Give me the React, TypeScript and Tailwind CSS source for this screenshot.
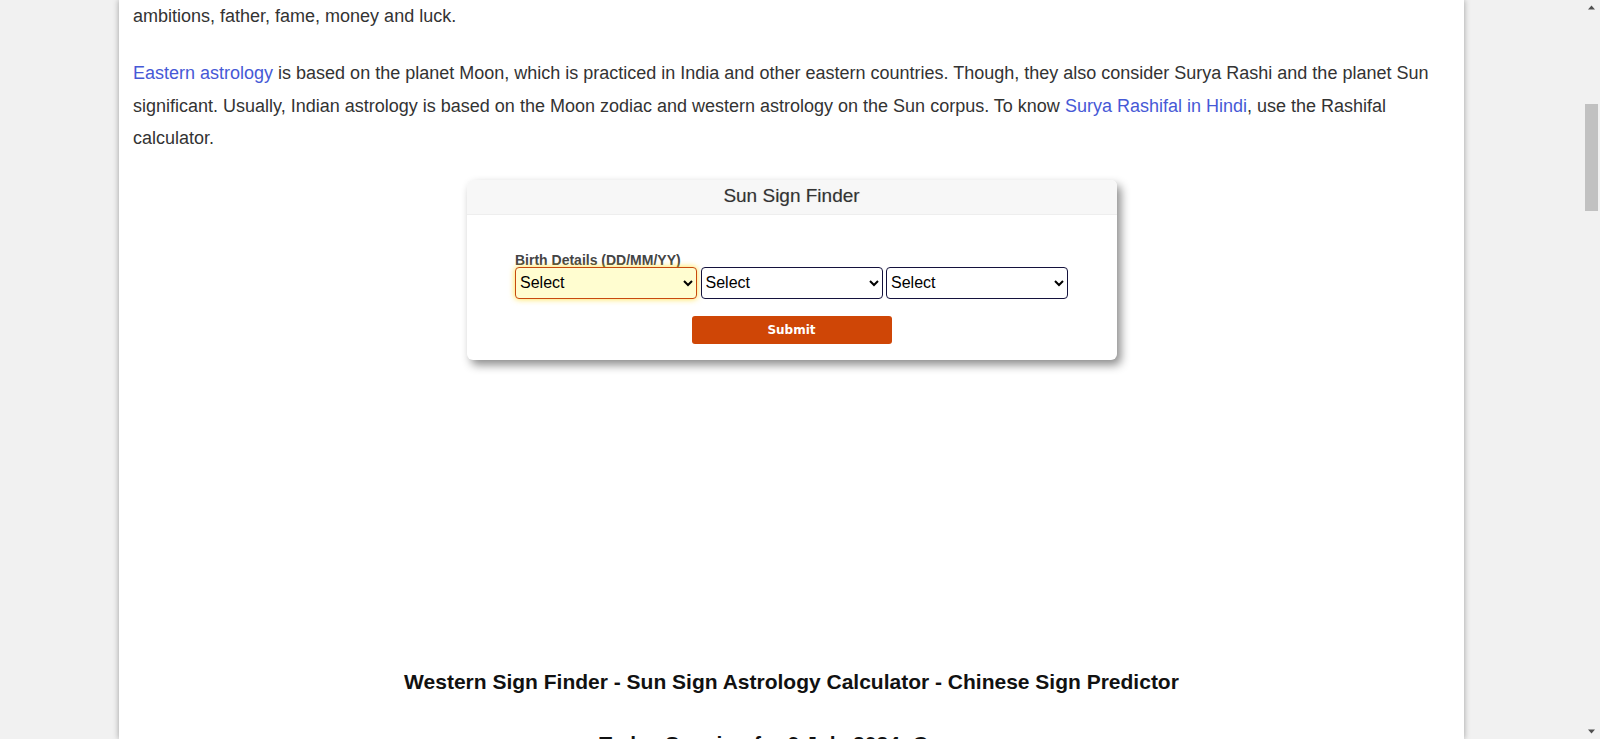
import React from "react";

const font = { fontFamily: '"Liberation Sans", Arial, sans-serif' };

function FakeScrollbar() {
  return (
    <div className="relative h-full w-[17px] shrink-0 bg-[#f1f1f1]">
      <svg className="absolute left-[4px] top-[4px]" width="9" height="7" viewBox="0 0 9 7">
        <path d="M4.5 1.5 L8 5.5 L1 5.5 Z" fill="#505050" />
      </svg>
      <div className="absolute left-[2px] top-[104px] h-[107px] w-[13px] bg-[#c1c1c1]" />
      <svg className="absolute bottom-[4px] left-[4px]" width="9" height="7" viewBox="0 0 9 7">
        <path d="M1 1.5 L8 1.5 L4.5 5.5 Z" fill="#505050" />
      </svg>
    </div>
  );
}

function DateSelect({ first }: { first?: boolean }) {
  return (
    <select
      defaultValue=""
      style={font}
      className={
        first
          ? "h-[32px] w-[182px] rounded-[4px] border border-[#c8490e] bg-[#fffdd0] px-0 text-[16px] text-black shadow-[0_0_6px_rgba(255,214,0,0.75)] outline-none"
          : "h-[32px] w-[182px] rounded-[4px] border border-[#14123d] bg-white px-0 text-[16px] text-black outline-none"
      }
    >
      <option value="">Select</option>
    </select>
  );
}

function SunSignFinder() {
  return (
    <div className="mx-auto mt-[25px] w-[650px] overflow-hidden rounded-[6px] bg-white shadow-[4px_5px_10px_rgba(0,0,0,0.45)]">
      <div
        style={font}
        className="flex h-[35px] items-center justify-center border-b border-[#eeeeee] bg-[#f7f7f7] text-[19px] text-[#333] [text-shadow:0_0_1px_rgba(0,0,0,0.25)]"
      >
        Sun Sign Finder
      </div>
      <div className="flex flex-col items-center pb-[16px] pt-[38px]">
        <div className="w-[553px]">
          <div style={font} className="h-[14px] text-[14px] font-bold leading-[14px] text-[#444]">
            Birth Details (DD/MM/YY)
          </div>
          <div className="flex justify-between">
            <DateSelect first />
            <DateSelect />
            <DateSelect />
          </div>
        </div>
        <button
          type="button"
          style={{ fontFamily: '"DejaVu Sans", Verdana, sans-serif' }}
          className="mt-[17px] h-[28px] w-[200px] rounded-[3px] bg-[#cf4606] text-[12px] font-bold text-white"
        >
          Submit
        </button>
      </div>
    </div>
  );
}

export default function App() {
  return (
    <div className="flex h-[739px] w-[1600px] overflow-hidden bg-[#f1f1f1]" style={font}>
      <div className="h-full flex-1">
        <div className="mx-auto h-full w-[1345px] bg-white pl-[14px] pr-[14px] shadow-[0_0_6px_rgba(0,0,0,0.35)]">
          <p className="text-[18px] leading-[32.4px] text-[#333]">ambitions, father, fame, money and luck.</p>
          <p className="mt-[25px] text-[18px] leading-[32.4px] text-[#333]">
            <a className="text-[#4659d6]">Eastern astrology</a> is based on the planet Moon, which is practiced in
            India and other eastern countries. Though, they also consider Surya Rashi and the planet Sun significant.
            Usually, Indian astrology is based on the Moon zodiac and western astrology on the Sun corpus. To know{" "}
            <a className="text-[#4659d6]">Surya Rashifal in Hindi</a>, use the Rashifal calculator.
          </p>
          <SunSignFinder />
          <h2 className="mt-[310px] text-center text-[21px] font-bold leading-[24px] text-[#111]">
            Western Sign Finder - Sun Sign Astrology Calculator - Chinese Sign Predictor
          </h2>
          <h2 className="mt-[38px] text-center text-[21px] font-bold leading-[24px] text-[#111]">
            Today Sunsign for 9 July 2024: Cancer
          </h2>
        </div>
      </div>
      <FakeScrollbar />
    </div>
  );
}
